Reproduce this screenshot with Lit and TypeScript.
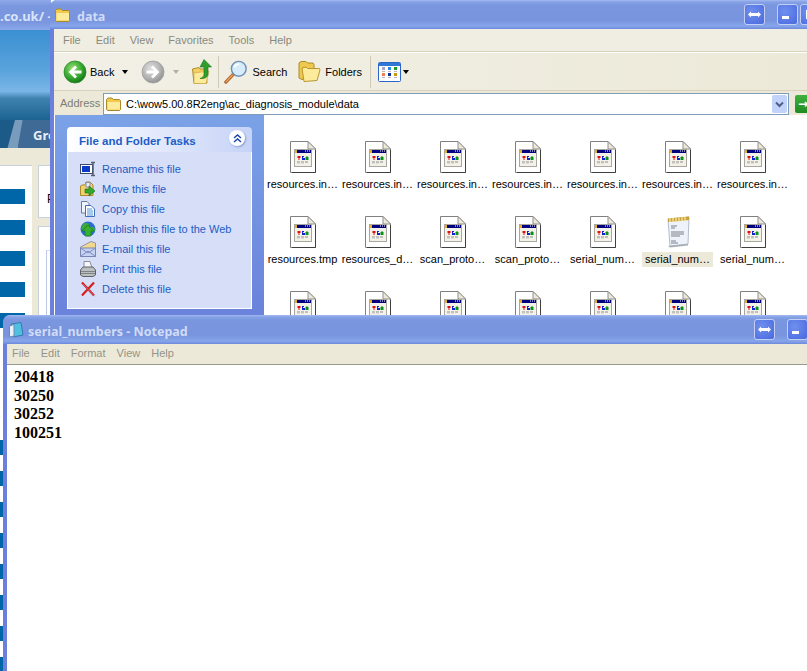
import { LitElement, html, css } from 'lit';
import { customElement } from 'lit/decorators.js';

// small icon helpers, drawn by hand to look like the XP ones
const fileIcon = () => html`<svg class="icon" width="26" height="32" viewBox="0 0 26 32">
  <path d="M.5.5H18L25.5 8V31.5H.5Z" fill="#fff" stroke="#808080"/>
  <path d="M25.5 9V31.5H2" fill="none" stroke="#404040"/>
  <path d="M18 .5V8H25.5Z" fill="#ece9d8" stroke="#909090"/>
  <rect x="4.5" y="8.5" width="17" height="17" fill="#f4f2e8" stroke="#a8a8a0"/>
  <rect x="5" y="9" width="16" height="3" fill="#000080"/>
  <rect x="5" y="9" width="2" height="3" fill="#e8b020"/>
  <path d="M15 10h1M17 10h1M19 10h1" stroke="#fff"/>
  <path d="M7.500 15h3v2h-1v2h-1v-2h-1Z" fill="#e01010"/>
  <path d="M12 15h2v1h-1v1h2v2h-3Z" fill="#1020d0"/>
  <path d="M16.500 15h1v1h1v3h-3v-3h1Z" fill="#089018"/>
  <path d="M7 21h3M11 21h3M15 21h3" stroke="#8c8c8c"/>
  <path d="M7 22h3M11 22h3" stroke="#c4c4c4"/>
</svg>`;

const noteIcon = () => html`<svg class="icon" width="26" height="32" viewBox="0 0 26 32">
  <path d="M3 3L24 1L23 28L5 30Z" fill="#eef2fb" stroke="#b4bccb"/>
  <path d="M3 30L23 28L23 29.5L5 31.5Z" fill="#a8aeb8"/>
  <path d="M3 2.500L24 .5V4L3 6Z" fill="#c9a03c"/>
  <path d="M5 2v4M8 2v4M11 1.500v4M14 1.500v4M17 1v4M20 1v4" stroke="#f4dc8a" stroke-width="1.500"/>
  <path d="M6 10h6M6 12h4M6 16h13M6 18h13M6 20h9M6 25h5M6 27h7" stroke="#7a808c"/>
</svg>`;

const folderIcon = (w = 16, h = 14) => html`<svg width=${w} height=${h} viewBox="0 0 16 14">
  <path d="M.5 12.500V2.500L2 1H6L7.500 2.500H13.500L14.500 3.500V12.500L13.500 13.500H1.500Z" fill="#f0c850" stroke="#a98a28"/>
  <path d="M1.500 5H14V12.500H1.500Z" fill="#fdeb9c"/>
</svg>`;

const backIcon = (grey: boolean) => html`<svg width="24" height="24" viewBox="0 0 24 24">
  <defs>
    <radialGradient id="g" cx=".4" cy=".35" r=".7"><stop offset="0" stop-color="#9be07a"/><stop offset=".6" stop-color="#35a82e"/><stop offset="1" stop-color="#0f6f16"/></radialGradient>
    <radialGradient id="s" cx=".4" cy=".35" r=".7"><stop offset="0" stop-color="#e2e2e2"/><stop offset=".6" stop-color="#b4b4b4"/><stop offset="1" stop-color="#8e8e8e"/></radialGradient>
  </defs>
  <circle cx="12" cy="12" r="11" fill=${grey ? 'url(#s)' : 'url(#g)'} stroke=${grey ? '#a0a0a0' : '#2f8a2a'} stroke-width=".8"/>
  <path d=${grey ? 'M5.500 10.500H13L10 7.500L12 5.500L18.500 12L12 18.500L10 16.500L13 13.500H5.500Z' : 'M18.500 10.500H11L14 7.500L12 5.500L5.500 12L12 18.500L14 16.500L11 13.500H18.500Z'} fill="#fff"/>
</svg>`;

const upIcon = () => html`<svg width="20" height="26" viewBox="0 0 20 26">
  <path d="M.5 10L7 8.500L8 10H14L15 24L2 24.500Z" fill="#f2cf62" stroke="#b08c2c"/>
  <path d="M2 14L17 12L14 24.500L2 24.500Z" fill="#fdeb9c" stroke="#c9a53f" stroke-width=".6"/>
  <path d="M12 .5L19.500 8H16V15C16 18 13 20 8 19.500C11 18.500 12 17 12 15V8H8Z" fill="#2f9f2c" stroke="#1a701c" stroke-width=".6"/>
</svg>`;

const searchIcon = () => html`<svg width="24" height="24" viewBox="0 0 26 26">
  <path d="M2 24L10 15.500" stroke="#b0652a" stroke-width="3.500" stroke-linecap="round"/>
  <path d="M2.500 23.500L9 16.500" stroke="#f0a860" stroke-width="1.300" stroke-linecap="round"/>
  <circle cx="16" cy="9.500" r="8" fill="#d6ecfb" stroke="#6f93b8" stroke-width="1.600"/>
  <path d="M11 8C12 5.500 14 4.500 16.500 4.500" fill="none" stroke="#fff" stroke-width="2"/>
</svg>`;

const foldersIcon = () => html`<svg width="23" height="21" viewBox="0 0 23 21">
  <path d="M1 17V2L3 .5H8L9.500 2H15L16 3.500V16L4 18.500Z" fill="#f0c850" stroke="#a98a28"/>
  <path d="M4 7L8 6L9.500 7.500H21.500L22 9L19 19.500L6 20.500Z" fill="#fdeb9c" stroke="#b8962f"/>
</svg>`;

const viewsIcon = () => html`<svg width="23" height="20" viewBox="0 0 23 20">
  <rect x=".5" y=".5" width="22" height="19" rx="1" fill="#fff" stroke="#2a66c8"/>
  <rect x="1" y="1" width="21" height="3" fill="#2f78d8"/>
  <rect x="4" y="5" width="3" height="3" fill="#a8a0d8"/><rect x="10" y="5" width="3" height="3" fill="#2a88e0"/><rect x="16" y="5" width="3" height="3" fill="#1c9a2c"/>
  <rect x="4" y="11" width="3" height="3" fill="#f08050"/><rect x="10" y="11" width="3" height="3" fill="#103898"/><rect x="16" y="11" width="3" height="3" fill="#c89810"/>
  <path d="M4 9.500h3M10 9.500h3M16 9.500h3M4 15.500h3M10 15.500h3M16 15.500h3" stroke="#b8b8b8"/>
</svg>`;

const restoreGlyph = () => html`<svg width="13" height="7" viewBox="0 0 13 7"><path d="M0 3.500L3 .5V2H10V.5L13 3.500L10 6.500V5H3V6.500Z" fill="#fff"/></svg>`;

const chevronUp = () => html`<svg width="9" height="9" viewBox="0 0 9 9"><path d="M1 4L4.500 1L8 4M1 8L4.500 5L8 8" fill="none" stroke="#1a44b0" stroke-width="1.400"/></svg>`;

const taskIcons = {
  rename: html`<svg width="16" height="16" viewBox="0 0 16 16">
    <rect x=".5" y="3.500" width="12" height="9" fill="#fff" stroke="#3a4a6a"/><rect x="2" y="5" width="8" height="6" fill="#0a3ac8"/>
    <path d="M11 1.500h4M13 1.500V14M11 14.500h4" stroke="#555f70" stroke-width="1.500"/></svg>`,
  move: html`<svg width="16" height="16" viewBox="0 0 16 16">
    <path d="M.5 14.500V5L2 4H5L6 1H10L13 4V14.500Z" fill="#f0d070" stroke="#a98a28"/><path d="M6 1.500H10V6H6Z" fill="#e8ecf8" stroke="#8a94aa"/>
    <path d="M5 8H9V5L15 10L9 15V12H5Z" fill="#2fa82c" stroke="#1a701c" stroke-width=".6"/></svg>`,
  copy: html`<svg width="16" height="16" viewBox="0 0 16 16">
    <path d="M1.500 .5H7L9 2.500V12H1.500Z" fill="#eef3fc" stroke="#6a7a9a"/>
    <path d="M5.500 4.500H11L14.500 8V15.500H5.500Z" fill="#fff" stroke="#3f6fb8"/>
    <path d="M7 8h5M7 10h6M7 12h6M7 14h6" stroke="#4f92dc"/></svg>`,
  publish: html`<svg width="16" height="16" viewBox="0 0 16 16">
    <circle cx="8" cy="8" r="7.500" fill="#2a6fd0"/><path d="M3 3C6 1 9 2 9 4S6 6 5 8 2 9 1 7ZM10 6C13 5 15 7 15 10L12 11Z" fill="#3fa83a"/>
    <path d="M8 4L14 10H11V15H5V10H2Z" fill="#35b030" stroke="#18701a" stroke-width=".6"/></svg>`,
  email: html`<svg width="16" height="16" viewBox="0 0 16 16">
    <path d="M.5 6L11 .5L15.500 2V15.500H.5Z" fill="#f2d88a" stroke="#8a94b8"/><path d="M.5 7H15.500V15.500H.5Z" fill="#c6d2f2" stroke="#7a86b0"/>
    <path d="M.5 15.500L8 10L15.500 15.500M.5 7L8 12L15.500 7" fill="none" stroke="#7f8cc0"/></svg>`,
  print: html`<svg width="16" height="16" viewBox="0 0 16 16">
    <path d="M4 .5H10L12 7H4Z" fill="#f4f6fa" stroke="#8a8f98"/>
    <path d="M.5 9L3 6H13L15.500 9V14L13 15.500H3L.5 14Z" fill="#bcbfc0" stroke="#5f6468"/>
    <path d="M1 10.500H15M1 12.500H15" stroke="#7d8286"/></svg>`,
  del: html`<svg width="16" height="16" viewBox="0 0 16 16"><path d="M2 1.500L14 14.500M14 1.500L2 14.500" stroke="#d81e1e" stroke-width="2.200"/><path d="M3 3L15 15.500" stroke="#9aa0c8" stroke-width=".6"/></svg>`,
};

const tasks = [
  ['Rename this file', taskIcons.rename],
  ['Move this file', taskIcons.move],
  ['Copy this file', taskIcons.copy],
  ['Publish this file to the Web', taskIcons.publish],
  ['E-mail this file', taskIcons.email],
  ['Print this file', taskIcons.print],
  ['Delete this file', taskIcons.del],
] as const;

const files = [
  ...Array(7).fill('resources.in…'),
  'resources.tmp', 'resources_d…', 'scan_proto…', 'scan_proto…', 'serial_num…', 'serial_num…', 'serial_num…',
  ...Array(7).fill(''),
];

@customElement('app-root')
export class AppRoot extends LitElement {
  static styles = css`
    :host { display: block; }
    .desk {
      position: relative;
      width: 807px;
      height: 671px;
      overflow: hidden;
      background: #fff;
      font-family: "Liberation Sans", Arial, sans-serif;
      font-size: 11px;
      color: #000;
    }

    /* browser window behind, only its left edge shows */
    .back { position: absolute; left: 0; top: 0; width: 51px; height: 671px; display: flex; flex-direction: column; overflow: hidden; }
    .back-title {
      height: 30px; flex: none; white-space: nowrap;
      font: bold 13px/32px "Noto Sans", sans-serif; color: #d8e4f8;
      background: linear-gradient(#8fa9e8, #7a96df 20%, #7a96df 75%, #8aa8ea);
    }
    .banner { height: 90px; flex: none; background: linear-gradient(#3a90d2, #5aa3dc 45%, #7ab6e6 68%, #3f82b0 76%, #1d6391); }
    .tabs { height: 28px; flex: none; display: flex; background: #ece9d8; }
    .tab-a { width: 18px; flex: none; background: linear-gradient(105deg, #1c5a88 0 14px, #7a9cbc 15px); }
    .tab-b {
      flex: 1; padding-left: 15px; background: linear-gradient(100deg, #7a9cbc 0 4px, #3f6a96 5px);
      font: bold 13px/30px "Noto Sans", sans-serif; color: #e8eef5; white-space: nowrap;
    }
    .back-body { flex: 1; display: flex; gap: 6px; padding-top: 17px; background: #ece9d8; }
    .col-a { width: 32px; flex: none; box-sizing: border-box; padding-top: 23px; background: #fff; border-top: 1px solid #c8d2da; display: flex; flex-direction: column; gap: 16px; }
    .stripe { width: 25px; height: 15px; flex: none; background: #0066a8; }
    .stripe.far { margin-top: 96px; }
    .col-b { flex: 1; display: flex; flex-direction: column; gap: 8px; }
    .card-a { height: 53px; flex: none; background: #fff; border: 1px solid #c8d2da; border-right: 0; box-sizing: border-box; padding: 26px 0 0 8px; line-height: 14px; font-size: 12px; }
    .card-b { flex: 1; background: #fff; border: 1px solid #c8d2da; border-right: 0; padding: 23px 0 0 7px; }
    .card-inner { height: 100%; border-left: 1px solid #c0c8e8; border-top: 1px solid #d8dcf0; }

    /* xp window */
    .win {
      position: absolute; box-sizing: border-box; display: flex; flex-direction: column;
      border-radius: 7px 7px 0 0; overflow: hidden;
      background: linear-gradient(90deg, #6b80dc, #8ba0e8);
      padding: 0 0 0 4px;
    }
    .explorer { left: 50px; top: 0; width: 798px; height: 400px; }
    .notepad { left: 3px; top: 315px; width: 855px; height: 356px; }
    .title {
      height: 29px; flex: none; margin-left: -4px; padding: 0 4px 0 5px; display: flex; align-items: center;
      background: linear-gradient(#a4baf0, #86a2e6 2px, #7a96df 5px, #7894de 70%, #86a6ea 90%, #6d88dc);
      color: #d0dcf6; font: bold 12.500px "Noto Sans", sans-serif; white-space: nowrap;
    }
    .title-text { margin-left: 4px; padding-top: 4px; }
    .explorer .title-text { margin-left: 6px; }
    .btns { margin-left: auto; display: flex; gap: 2px; }
    .btn {
      box-sizing: border-box; width: 21px; height: 21px; display: flex; align-items: center; justify-content: center;
      border: 1px solid #c3d0f4; border-radius: 3px; background: radial-gradient(circle at 35% 35%, #6f90ee, #4a68e0);
    }
    .btn.gap { margin-right: 10px; }
    .min-bar { width: 7px; height: 3px; background: #fff; margin: 6px 4px 0 0; }
    .max-box { width: 9px; height: 9px; box-sizing: border-box; border: 1px solid #fff; border-top-width: 3px; }
    .menu { height: 23px; flex: none; display: flex; align-items: center; gap: 15px; padding-left: 9px; box-sizing: border-box; background: #f0eee2; border-bottom: 1px solid #d8d2bd; box-shadow: 0 1px 0 #fff; color: #8a8a80; }
    .notepad .menu { height: 21px; padding: 0 0 2px 5px; gap: 11px; background: #ece9d8; border-bottom: 1px solid #9a9a90; box-shadow: none; color: #94948a; }
    .toolbar { height: 38px; flex: none; margin-top: 1px; box-sizing: border-box; display: flex; align-items: center; background: linear-gradient(90deg, #f2f0e6, #ece9d8); border-bottom: 1px solid #d8d2bd; padding-left: 9px; }
    .tool { display: flex; align-items: center; gap: 4px; }
    .tool.tight { gap: 2px; }
    .tool.back-btn { gap: 3px; }
    .tool.folders { margin-left: 11px; }
    .tri { width: 0; height: 0; border: 3px solid transparent; border-top: 4px solid #000; border-bottom: 0; }
    .tri.a { margin: 0 13px 0 8px; }
    .tri.b { margin: 0 13px 0 8px; border-top-color: #b0b0a8; }
    .sep { width: 1px; height: 32px; background: #cfcbb8; flex: none; }
    .sep.a { margin: 0 5px 0 6px; }
    .sep.b { margin: 0 7px 0 8px; }
    .address { height: 24px; flex: none; display: flex; align-items: flex-end; gap: 6px; padding-left: 6px; background: #ece9d8; box-sizing: border-box; }
    .addr-label { color: #7d7d70; width: 37px; flex: none; align-self: center; white-space: nowrap; }
    .addr-box {
      flex: 1; height: 22px; box-sizing: border-box; background: #fff; border: 1px solid #7f9db9;
      display: flex; align-items: center; gap: 4px; padding: 0 1px 0 2px;
    }
    .drop { margin-left: auto; width: 15px; height: 18px; border-radius: 2px; background: #c1d3fb; display: flex; align-items: center; justify-content: center; }
    .go { width: 53px; height: 18px; margin-bottom: 2px; flex: none; background: linear-gradient(#3fb13c, #1f8a22); border-radius: 2px; color: #fff; font: bold 12px/18px "DejaVu Sans", sans-serif; padding-left: 3px; box-sizing: border-box; }
    .main { flex: 1; display: flex; min-height: 0; border-left: 1px solid #fff; }
    .pane { width: 209px; flex: none; box-sizing: border-box; padding: 12px 12px 0; background: linear-gradient(#7ba2e7, #6375d6); }
    .box-head {
      height: 25px; border-radius: 4px 4px 0 0; display: flex; align-items: center; justify-content: space-between; padding: 0 5px 0 12px;
      background: linear-gradient(90deg, #fff, #c6d3f7); color: #215dc6; font-weight: bold; font-size: 11.500px;
    }
    .box-title { padding-top: 2px; }
    .chev { width: 16px; height: 16px; margin: -3px 2px 0 0; border-radius: 50%; background: #fff; box-shadow: 1px 1px 2px #8a9cd0; display: flex; align-items: center; justify-content: center; }
    .box-body { box-sizing: border-box; height: 157px; background: #d6dff7; border: 1px solid #fff; border-top: 0; padding: 7px 0 0 12px; display: flex; flex-direction: column; }
    .task { height: 20px; flex: none; display: flex; align-items: center; gap: 6px; color: #215dc6; white-space: nowrap; }
    .task svg { flex: none; }
    .files { flex: 1; background: #fff; padding: 26px 0 0 1px; display: grid; grid-template-columns: repeat(7, 75px); grid-auto-rows: 75px; }
    .cell { display: flex; flex-direction: column; align-items: center; }
    .icon { flex: none; }
    .label { margin-top: 4px; padding: 0 3px; height: 15px; line-height: 15px; white-space: nowrap; }
    .cell.sel .label { background: #ece9d8; }
    .doc {
      flex: 1; background: #fff; padding: 3px 0 0 7px;
      font: bold 16px/18.700px "Liberation Serif", "Times New Roman", serif; color: #000;
    }
  `;

  private stripes() {
    const n = [0, 1, 2, 3, 4, 5, 6, 7, 8, 9, 10, 11, 12];
    return n.map((i) => html`<div class="stripe ${i === 5 ? 'far' : ''}"></div>`);
  }

  render() {
    return html`<div class="desk">
      <div class="back">
        <div class="back-title">.co.uk/ -</div>
        <div class="banner"></div>
        <div class="tabs"><div class="tab-a"></div><div class="tab-b">Gro</div></div>
        <div class="back-body">
          <div class="col-a">${this.stripes()}</div>
          <div class="col-b">
            <div class="card-a">P</div>
            <div class="card-b"><div class="card-inner"></div></div>
          </div>
        </div>
      </div>

      <div class="win explorer">
        <div class="title">
          ${folderIcon()}<span class="title-text">data</span>
          <div class="btns">
            <div class="btn gap">${restoreGlyph()}</div>
            <div class="btn"><div class="min-bar"></div></div>
            <div class="btn"><div class="max-box"></div></div>
            <div class="btn"></div>
          </div>
        </div>
        <div class="menu">
          <span>File</span><span>Edit</span><span>View</span><span>Favorites</span><span>Tools</span><span>Help</span>
        </div>
        <div class="toolbar">
          <div class="tool back-btn">${backIcon(false)}<span>Back</span></div>
          <div class="tri a"></div>
          <div class="tool">${backIcon(true)}</div>
          <div class="tri b"></div>
          <div class="tool">${upIcon()}</div>
          <div class="sep a"></div>
          <div class="tool">${searchIcon()}<span>Search</span></div>
          <div class="tool folders">${foldersIcon()}<span>Folders</span></div>
          <div class="sep b"></div>
          <div class="tool tight">${viewsIcon()}<div class="tri"></div></div>
        </div>
        <div class="address">
          <span class="addr-label">Address</span>
          <div class="addr-box">
            ${folderIcon()}<span>C:\\wow5.00.8R2eng\\ac_diagnosis_module\\data</span>
            <div class="drop"><svg width="9" height="7" viewBox="0 0 9 7"><path d="M1 1.500L4.500 5L8 1.500" fill="none" stroke="#4d6185" stroke-width="2"/></svg></div>
          </div>
          <div class="go">→</div>
        </div>
        <div class="main">
          <div class="pane">
            <div class="box-head"><span class="box-title">File and Folder Tasks</span><div class="chev">${chevronUp()}</div></div>
            <div class="box-body">
              ${tasks.map(([t, i]) => html`<div class="task">${i}<span>${t}</span></div>`)}
            </div>
          </div>
          <div class="files">
            ${files.map((f, i) => html`<div class="cell ${i === 12 ? 'sel' : ''}">
              ${i === 12 ? noteIcon() : fileIcon()}
              ${f ? html`<div class="label">${f}</div>` : ''}
            </div>`)}
          </div>
        </div>
      </div>

      <div class="win notepad">
        <div class="title">
          <svg width="16" height="16" viewBox="0 0 16 16">
            <path d="M3 2L13 .5L15 13L5 15Z" fill="#4fc0e0" stroke="#3a78b0"/>
            <path d="M1.500 4L6 2.500V14L1.500 15Z" fill="#e8f0fa" stroke="#6a8ab8"/>
          </svg>
          <span class="title-text">serial_numbers - Notepad</span>
          <div class="btns">
            <div class="btn gap">${restoreGlyph()}</div>
            <div class="btn"><div class="min-bar"></div></div>
            <div class="btn"><div class="max-box"></div></div>
            <div class="btn"></div>
          </div>
        </div>
        <div class="menu">
          <span>File</span><span>Edit</span><span>Format</span><span>View</span><span>Help</span>
        </div>
        <div class="doc">20418<br />30250<br />30252<br />100251</div>
      </div>
    </div>`;
  }
}
